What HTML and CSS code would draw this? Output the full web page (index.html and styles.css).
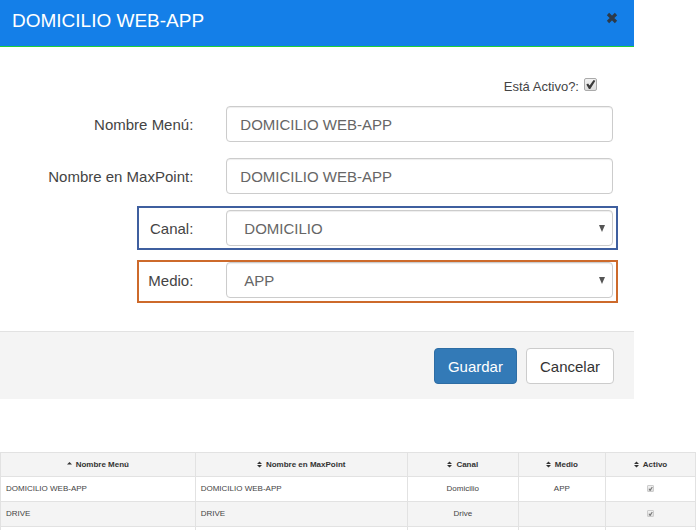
FILE: index.html
```html
<!DOCTYPE html>
<html lang="es">
<head>
<meta charset="utf-8">
<meta name="viewport" content="width=device-width, initial-scale=1">
<title>DOMICILIO WEB-APP</title>
<link rel="stylesheet" href="styles.css">
</head>
<body>
<form class="modal">
  <header class="modal-header">
    <h1 class="modal-title">DOMICILIO WEB-APP</h1>
    <button class="close" type="button" aria-label="Cerrar">
      <svg viewBox="0 0 12 12" width="12" height="12"><path d="M2 2L10 10M10 2L2 10" fill="none" stroke="#2d3a48" stroke-width="3.2"/></svg>
    </button>
  </header>
  <div class="modal-body">
    <div class="active-row">
      <label for="activo">Está Activo?:</label>
      <input class="check" id="activo" type="checkbox" checked>
    </div>
    <div class="field">
      <label for="nombre">Nombre Menú:</label>
      <input class="control" id="nombre" type="text" value="DOMICILIO WEB-APP">
    </div>
    <div class="field">
      <label for="maxpoint">Nombre en MaxPoint:</label>
      <input class="control" id="maxpoint" type="text" value="DOMICILIO WEB-APP">
    </div>
    <div class="field framed framed-blue">
      <label for="canal">Canal:</label>
      <div class="select-wrap"><select class="control" id="canal"><option>DOMICILIO</option></select></div>
    </div>
    <div class="field framed framed-orange">
      <label for="medio">Medio:</label>
      <div class="select-wrap"><select class="control" id="medio"><option>APP</option></select></div>
    </div>
  </div>
  <footer class="modal-footer">
    <button class="btn btn-primary" type="submit">Guardar</button>
    <button class="btn" type="button">Cancelar</button>
  </footer>
</form>
<table class="menus">
  <colgroup><col class="col-name"><col class="col-max"><col class="col-canal"><col class="col-medio"><col class="col-activo"></colgroup>
  <thead>
    <tr>
      <th><svg class="sort" viewBox="0 0 6 8"><path d="M0 4L3 1L6 4Z"/></svg>Nombre Menú</th>
      <th><svg class="sort" viewBox="0 0 6 8"><path d="M0 3.3L3 .3L6 3.3ZM0 4.7L3 7.7L6 4.7Z"/></svg>Nombre en MaxPoint</th>
      <th><svg class="sort" viewBox="0 0 6 8"><path d="M0 3.3L3 .3L6 3.3ZM0 4.7L3 7.7L6 4.7Z"/></svg>Canal</th>
      <th><svg class="sort" viewBox="0 0 6 8"><path d="M0 3.3L3 .3L6 3.3ZM0 4.7L3 7.7L6 4.7Z"/></svg>Medio</th>
      <th><svg class="sort" viewBox="0 0 6 8"><path d="M0 3.3L3 .3L6 3.3ZM0 4.7L3 7.7L6 4.7Z"/></svg>Activo</th>
    </tr>
  </thead>
  <tbody>
    <tr><td>DOMICILIO WEB-APP</td><td>DOMICILIO WEB-APP</td><td class="center">Domicilio</td><td class="center">APP</td><td class="center"><input class="check check-small" type="checkbox" aria-label="Activo" checked disabled></td></tr>
    <tr><td>DRIVE</td><td>DRIVE</td><td class="center">Drive</td><td></td><td class="center"><input class="check check-small" type="checkbox" aria-label="Activo" checked disabled></td></tr>
    <tr><td></td><td></td><td></td><td></td><td></td></tr>
  </tbody>
</table>
</body>
</html>
```
FILE: styles.css
```css
* {
  box-sizing: border-box;
}

body {
  margin: 0;
  height: 100vh;
  overflow: hidden;
  background: #fff;
  color: #444;
  font-family: "Liberation Sans", Arial, sans-serif;
  font-size: 15px;
}

.modal {
  width: 90.7%;
}

.modal-header {
  display: flex;
  justify-content: space-between;
  align-items: flex-start;
  padding: 10px 16px 14px 12px;
  background: #147fe8;
  border-bottom: 1px solid #1fd03c;
}

.modal-title {
  margin: 0;
  color: #fff;
  font-size: 19px;
  font-weight: 400;
  line-height: 22px;
}

.close {
  display: flex;
  margin: 2px 0 0;
  padding: 0;
  border: 0;
  background: none;
}

.modal-body {
  display: grid;
  gap: 16px;
  padding: 31px 21px 33px 0;
}

.active-row {
  display: flex;
  justify-content: flex-end;
  gap: 5px;
  height: 12px;
  padding-right: 16px;
  font-size: 13px;
  line-height: 18px;
}

.field {
  display: grid;
  grid-template-columns: 1fr 2fr;
  gap: 33px;
  align-items: center;
  text-align: right;
}

.control {
  display: block;
  width: 100%;
  height: 36px;
  padding: 0 13px;
  border: 1px solid #ccc;
  border-radius: 4px;
  background: #fff;
  box-shadow: inset 0 1px 1px #eee;
  color: #666;
  font: inherit;
}

.select-wrap {
  position: relative;
}

select.control {
  appearance: none;
  padding: 0 17px;
}

.select-wrap::after {
  content: "";
  position: absolute;
  top: 15px;
  right: 8px;
  width: 6px;
  height: 7px;
  background: #555;
  clip-path: polygon(0 0, 100% 0, 50% 100%);
  pointer-events: none;
}

.framed {
  position: relative;
}

.framed::after {
  content: "";
  position: absolute;
  inset: -4px -5px -4px 137px;
  border: 2px solid #3f5f9f;
  pointer-events: none;
}

.framed-orange::after {
  top: -2px;
  bottom: -5px;
  border-color: #cd6a2b;
}

.check {
  appearance: none;
  flex: none;
  width: 13px;
  height: 13px;
  margin: 0;
  border: 1px solid #aaa;
  border-radius: 2px;
  background: linear-gradient(#f2f2f2, #ddd);
}

.check::before {
  content: "";
  display: block;
  width: 100%;
  height: 100%;
  background: #3c3c3c;
  clip-path: polygon(12% 50%, 28% 40%, 42% 58%, 78% 8%, 95% 16%, 48% 92%, 36% 92%);
}

.check-small {
  display: inline-block;
  width: 7px;
  height: 7px;
  border-color: #ccc;
  border-radius: 1px;
  vertical-align: middle;
}

.check-small::before {
  background: #777;
}

.modal-footer {
  display: flex;
  justify-content: flex-end;
  gap: 9px;
  padding: 16px 20px 15px;
  border-top: 1px solid #e2e2e2;
  background: #f4f4f4;
}

.btn {
  height: 36px;
  padding: 0 13px;
  border: 1px solid #ccc;
  border-radius: 4px;
  background: #fff;
  color: #333;
  font: inherit;
}

.btn-primary {
  border-color: #2e6da4;
  background: #337ab7;
  color: #fff;
}

.menus {
  width: 99.6%;
  margin-top: 53px;
  border-collapse: collapse;
  table-layout: fixed;
  font-size: 8px;
  line-height: 12px;
}

.col-name { width: 28%; }
.col-max { width: 30.5%; }
.col-canal { width: 16%; }
.col-medio { width: 12.5%; }
.col-activo { width: 13%; }

.menus th,
.menus td {
  height: 25px;
  padding: 0 5px;
  border: 1px solid #e2e2e2;
  text-align: left;
}

.menus th {
  height: 24px;
  color: #333;
  text-align: center;
}

.menus thead tr,
.menus tbody tr:nth-child(even) {
  background: #f4f4f4;
}

.menus .center {
  text-align: center;
}

.sort {
  width: 5px;
  height: 7px;
  margin-right: 4px;
  vertical-align: middle;
  fill: #333;
}
```
